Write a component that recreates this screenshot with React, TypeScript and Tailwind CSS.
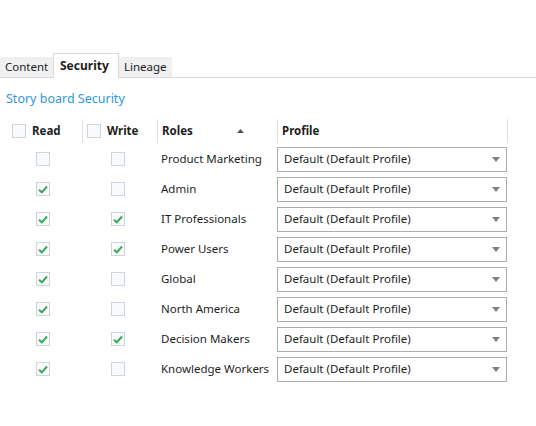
import React from "react";

const rows: { role: string; read: boolean; write: boolean }[] = [
  { role: "Product Marketing", read: false, write: false },
  { role: "Admin", read: true, write: false },
  { role: "IT Professionals", read: true, write: true },
  { role: "Power Users", read: true, write: true },
  { role: "Global", read: true, write: false },
  { role: "North America", read: true, write: false },
  { role: "Decision Makers", read: true, write: true },
  { role: "Knowledge Workers", read: true, write: false },
];

function Check({ checked }: { checked: boolean }) {
  return (
    <div className="w-[14px] h-[14px] border border-[#ccd5de] bg-[#f8fafc] flex items-center justify-center shrink-0">
      {checked && (
        <svg width="10" height="9" viewBox="0 0 10 9">
          <path d="M1 4.8 L3.8 7.3 L9 1.5" fill="none" stroke="#3aa85a" strokeWidth="2" />
        </svg>
      )}
    </div>
  );
}

function Arrow() {
  return (
    <svg width="8" height="5" viewBox="0 0 8 5">
      <path d="M0 0 L8 0 L4 5 Z" fill="#808080" />
    </svg>
  );
}

export default function App() {
  return (
    <div
      className="w-[536px] h-[426px] bg-white text-[#1e1e1e] text-[11.5px]"
      style={{ fontFamily: '"Noto Sans", "Segoe UI", sans-serif' }}
    >
      <div className="h-[53px]" />
      <div className="flex items-end h-[25px] border-b border-[#dadada]">
        <div className="h-[20px] w-[53px] bg-[#f0f0f0] flex items-center pl-[5px]">Content</div>
        <div className="h-[25px] w-[66px] bg-white border border-b-0 border-[#dadada] flex items-center pl-[6px] font-bold text-[12px] -mb-px relative">
          Security
        </div>
        <div className="h-[20px] w-[53px] bg-[#f0f0f0] flex items-center pl-[5px]">Lineage</div>
      </div>
      <div className="pl-[6px] pt-[12px] h-[41px] text-[#3694d6] text-[12.5px] leading-[18px]">Story board Security</div>
      <div className="flex h-[24px] items-center font-bold">
        <div className="w-[82px] flex items-center pl-[12px] gap-[6px]">
          <Check checked={false} />
          <span>Read</span>
        </div>
        <div className="w-px h-[24px] bg-[#e2e2e2]" />
        <div className="w-[74px] flex items-center pl-[4px] gap-[6px]">
          <Check checked={false} />
          <span>Write</span>
        </div>
        <div className="w-px h-[24px] bg-[#e2e2e2]" />
        <div className="w-[119px] flex items-center pl-[4px]">
          <span>Roles</span>
          <svg className="ml-[44px]" width="7" height="4" viewBox="0 0 7 4">
            <path d="M0 4 L7 4 L3.5 0 Z" fill="#555" />
          </svg>
        </div>
        <div className="w-px h-[24px] bg-[#e2e2e2]" />
        <div className="w-[229px] flex items-center pl-[4px]">Profile</div>
        <div className="w-px h-[24px] bg-[#e2e2e2]" />
      </div>
      <div className="flex flex-col pt-[1px]">
        {rows.map((r) => (
          <div key={r.role} className="flex items-center h-[30px]">
            <div className="w-[82px] pl-[36px]">
              <Check checked={r.read} />
            </div>
            <div className="w-[75px] pl-[29px]">
              <Check checked={r.write} />
            </div>
            <div className="w-[120px] pl-[4px] whitespace-nowrap">{r.role}</div>
            <div className="w-[230px] h-[25px] border border-[#acacac] flex items-center justify-between pl-[6px] pr-[6px]">
              <span>Default (Default Profile)</span>
              <Arrow />
            </div>
          </div>
        ))}
      </div>
    </div>
  );
}
